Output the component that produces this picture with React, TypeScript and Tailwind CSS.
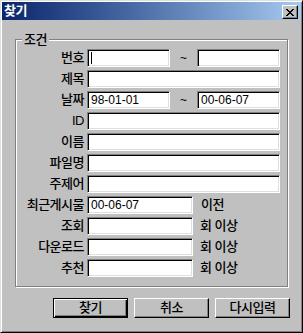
import React from "react";

const sunken =
  "h-[18px] bg-white border border-t-[#808080] border-l-[#808080] border-r-white border-b-white shadow-[inset_1px_1px_0_#000,inset_-1px_-1px_0_#dfdfdf] pl-[3px] text-[12px] leading-[16px] text-black flex items-center";

const ko = "text-[13px] leading-[18px] tracking-[-0.5px] font-medium whitespace-nowrap";

function Field({ w, value, caret }: { w: string; value?: string; caret?: boolean }) {
  return (
    <div className={`${sunken} ${w}`}>
      {caret && <span className="w-px h-[12px] bg-black" />}
      {value}
    </div>
  );
}

function Row({ label, children }: { label: string; children: React.ReactNode }) {
  return (
    <div className="flex items-center h-[18px]">
      <span className={`w-[68px] mr-[3px] text-right ${ko}`}>{label}</span>
      {children}
    </div>
  );
}

function Button({ label, isDefault }: { label: string; isDefault?: boolean }) {
  return (
    <button
      className={
        isDefault
          ? `w-[75px] h-[20px] bg-[#c0c0c0] border border-black shadow-[inset_1px_1px_0_#fff,inset_-1px_-1px_0_#000,inset_-2px_-2px_0_#808080] ${ko}`
          : `w-[75px] h-[20px] bg-[#c0c0c0] border border-t-white border-l-white border-r-black border-b-black shadow-[inset_-1px_-1px_0_#808080] ${ko}`
      }
    >
      {label}
    </button>
  );
}

export default function App() {
  return (
    <div className="w-[303px] h-[333px] bg-[#c0c0c0] border border-t-[#dfdfdf] border-l-[#dfdfdf] border-r-black border-b-black shadow-[inset_1px_1px_0_#fff,inset_-1px_-1px_0_#808080] p-px text-black font-[family-name:Liberation_Sans,Noto_Sans_CJK_KR,sans-serif] select-none">
      {/* title bar */}
      <div className="h-[18px] flex items-start justify-between bg-gradient-to-r from-[#0a246a] to-[#a6caf0]">
        <span className="pl-[2px] text-white text-[13px] leading-[18px] tracking-[-0.5px] font-bold">찾기</span>
        <div className="mt-[3px] mr-[3px] w-[16px] h-[14px] bg-[#c0c0c0] border border-t-white border-l-white border-r-black border-b-black shadow-[inset_-1px_-1px_0_#808080] flex items-center justify-center">
          <svg width="8" height="7" viewBox="0 0 8 7" shapeRendering="crispEdges">
            <path d="M0 0h2v1H0zM6 0h2v1H6zM1 1h2v1H1zM5 1h2v1H5zM2 2h4v1H2zM3 3h2v1H3zM2 4h4v1H2zM1 5h2v1H1zM5 5h2v1H5zM0 6h2v1H0zM6 6h2v1H6z" fill="#000" />
          </svg>
        </div>
      </div>

      {/* 조건 group */}
      <div className="relative ml-[13px] mt-[19px] w-[273px] border border-[#808080] shadow-[inset_1px_1px_0_#fff,1px_1px_0_#fff] pt-[9px] pb-[9px]">
        <span className={`absolute left-[6px] top-[-9px] px-[2px] bg-[#c0c0c0] ${ko}`}>조건</span>
        <div className="flex flex-col gap-[3px]">
          <Row label="번호">
            <Field w="w-[83px]" caret />
            <span className="w-[27px] text-center text-[12px]">~</span>
            <Field w="w-[83px]" />
          </Row>
          <Row label="제목">
            <Field w="w-[193px]" />
          </Row>
          <Row label="날짜">
            <Field w="w-[83px]" value="98-01-01" />
            <span className="w-[27px] text-center text-[12px]">~</span>
            <Field w="w-[83px]" value="00-06-07" />
          </Row>
          <Row label="ID">
            <Field w="w-[193px]" />
          </Row>
          <Row label="이름">
            <Field w="w-[193px]" />
          </Row>
          <Row label="파일명">
            <Field w="w-[193px]" />
          </Row>
          <Row label="주제어">
            <Field w="w-[193px]" />
          </Row>
          <Row label="최근게시물">
            <Field w="w-[106px]" value="00-06-07" />
            <span className={`ml-[8px] ${ko}`}>이전</span>
          </Row>
          <Row label="조회">
            <Field w="w-[106px]" />
            <span className={`ml-[7px] ${ko}`}>회 이상</span>
          </Row>
          <Row label="다운로드">
            <Field w="w-[106px]" />
            <span className={`ml-[7px] ${ko}`}>회 이상</span>
          </Row>
          <Row label="추천">
            <Field w="w-[106px]" />
            <span className={`ml-[7px] ${ko}`}>회 이상</span>
          </Row>
        </div>
      </div>

      {/* buttons */}
      <div className="flex gap-[6px] pl-[51px] mt-[11px]">
        <Button label="찾기" isDefault />
        <Button label="취소" />
        <Button label="다시입력" />
      </div>
    </div>
  );
}
